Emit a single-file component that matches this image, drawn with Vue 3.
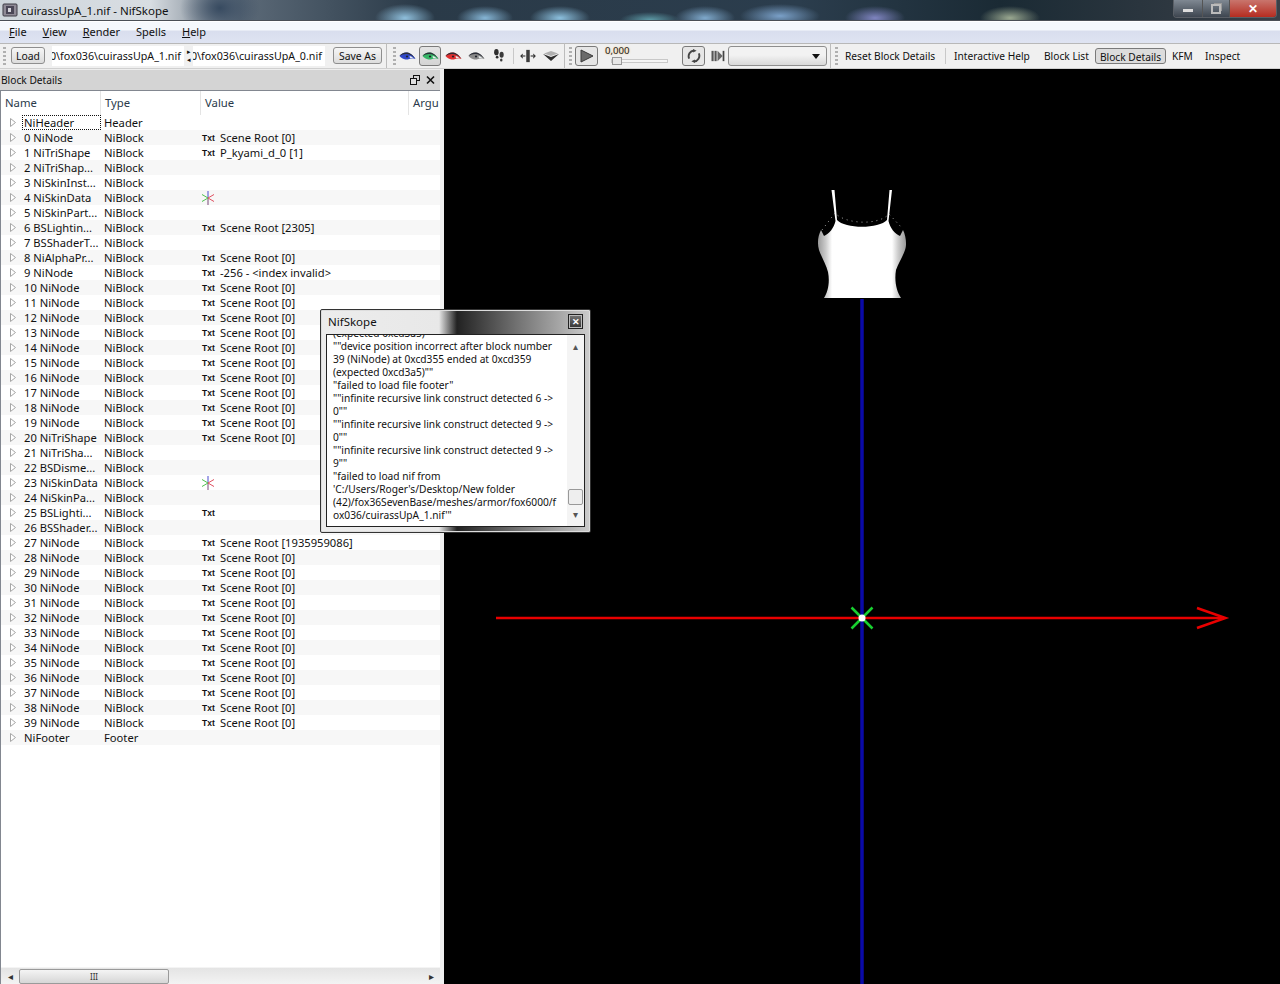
<script setup>
const short = { 2: 'NiTriShap...', 3: 'NiSkinInst...', 4: 'NiSkinData', 5: 'NiSkinPart...', 6: 'BSLightin...', 7: 'BSShaderT...', 8: 'NiAlphaPr...', 1: 'NiTriShape', 20: 'NiTriShape', 21: 'NiTriSha...', 22: 'BSDisme...', 23: 'NiSkinData', 24: 'NiSkinPa...', 25: 'BSLighti...', 26: 'BSShader...' }
const values = { 1: 'P_kyami_d_0 [1]', 6: 'Scene Root [2305]', 9: '-256 - <index invalid>', 25: '', 27: 'Scene Root [1935959086]' }
const noText = [2, 3, 4, 5, 7, 21, 22, 23, 24, 26]
const stars = [4, 23]

const rows = [{ key: 'h', name: 'NiHeader', type: 'Header', focus: true }]
for (let i = 0; i < 40; i++) {
  rows.push({
    key: i,
    name: i + ' ' + (short[i] || 'NiNode'),
    type: 'NiBlock',
    txt: !noText.includes(i),
    star: stars.includes(i),
    value: noText.includes(i) ? '' : (values[i] ?? 'Scene Root [0]')
  })
}
rows.push({ key: 'f', name: 'NiFooter', type: 'Footer' })

const logLines = [
  '""device position incorrect after block number',
  '39 (NiNode) at 0xcd355 ended at 0xcd359',
  '(expected 0xcd3a5)""',
  '"failed to load file footer"',
  '""infinite recursive link construct detected 6 ->',
  '0""',
  '""infinite recursive link construct detected 9 ->',
  '0""',
  '""infinite recursive link construct detected 9 ->',
  '9""',
  '"failed to load nif from',
  "'C:/Users/Roger's/Desktop/New folder",
  '(42)/fox36SevenBase/meshes/armor/fox6000/f',
  "ox036/cuirassUpA_1.nif'\""
]
const eyes = [
  { color: '#2f48c8', on: false },
  { color: '#35b565', on: true },
  { color: '#e03030', on: false },
  { color: '#8a8a8a', on: false }
]
</script>

<template>
  <div class="window">
    <header class="titlebar">
      <svg class="appicon" width="16" height="16" viewBox="0 0 16 16">
        <rect x="1" y="2" width="14" height="12" rx="1" fill="#8f8a96" stroke="#3d3a44" />
        <rect x="4" y="4" width="8" height="8" fill="#4a4656" />
        <rect x="6" y="6" width="3" height="4" fill="#d5d3da" />
      </svg>
      <span class="title">cuirassUpA_1.nif - NifSkope</span>
      <div class="caption">
        <span class="cap min"><i></i></span>
        <span class="cap max"><i></i></span>
        <span class="cap close">✕</span>
      </div>
    </header>

    <nav class="menubar">
      <span><u>F</u>ile</span>
      <span><u>V</u>iew</span>
      <span><u>R</u>ender</span>
      <span>Spells</span>
      <span><u>H</u>elp</span>
    </nav>

    <div class="toolbar">
      <div class="grip"></div>
      <button class="btn load">Load</button>
      <div class="path p1">0\fox036\cuirassUpA_1.nif</div>
      <div class="swap"><b>▸</b><b>◂</b></div>
      <div class="path p2">0\fox036\cuirassUpA_0.nif</div>
      <button class="btn save">Save As</button>
      <div class="sep"></div>
      <div class="grip"></div>
      <div class="icons">
        <span v-for="eye in eyes" :key="eye.color" class="tool" :class="{ on: eye.on }">
          <svg width="17" height="10" viewBox="0 0 17 10">
            <path d="M.5 5 C4 .5 11 -.5 16.500 8 C11 6.500 10 9 6.500 8.500 C4 8.200 2 6.500 .5 5Z" :fill="eye.color" />
            <path d="M.5 5 C4 .5 11 -.5 16.500 8 C12 2.500 6 1.500 .5 5Z" fill="#2c2f38" />
            <circle cx="8" cy="5.500" r="1.100" fill="#20242c" />
            <path d="M10.500 5 C12 5 13.500 6.300 14.500 7.300 L11 7.300Z" fill="#e6ecec" />
          </svg>
        </span>
        <span class="tool">
          <svg width="12" height="15" viewBox="0 0 16 18">
            <ellipse cx="4.500" cy="4.500" rx="3" ry="4.200" fill="#2e2e2e" />
            <ellipse cx="5.500" cy="11.200" rx="1.800" ry="1.800" fill="#2e2e2e" />
            <ellipse cx="11.500" cy="8" rx="2.800" ry="4" fill="#3a3a3a" />
            <ellipse cx="11" cy="15" rx="1.700" ry="2" fill="#3a3a3a" />
          </svg>
        </span>
        <i class="vline"></i>
        <span class="tool">
          <svg width="16" height="14" viewBox="0 0 18 16">
            <rect x="7" y="1" width="4" height="14" fill="#3c3c3c" />
            <path d="M0 8l3-3v6zM18 8l-3-3v6z" fill="#333" />
            <rect x="3" y="7" width="3" height="2" fill="#777" />
            <rect x="12" y="7" width="3" height="2" fill="#777" />
          </svg>
        </span>
        <span class="tool">
          <svg width="16" height="10" viewBox="0 0 16 10">
            <path d="M1 2.500 L8 0 L15 2.500 L8 5Z" fill="#b0b0b0" />
            <path d="M0 3 L8 6 L16 3 L8 10Z" fill="#2e2e2e" />
          </svg>
        </span>
      </div>
      <div class="sep after-icons"></div>
      <div class="grip"></div>
      <span class="tool square">
        <svg width="14" height="14" viewBox="0 0 14 14"><path d="M1 1 L13 7 L1 13Z" fill="#6a6a6a" stroke="#3a3a3a" /></svg>
      </span>
      <div class="timebox">
        <span class="time">0,000</span>
        <div class="slider"><i></i></div>
      </div>
      <span class="tool square loop">
        <svg width="14" height="14" viewBox="0 0 16 16" fill="none" stroke="#444" stroke-width="2.200">
          <path d="M2.500 11 A6.500 6.500 0 0 1 8 1.800" />
          <path d="M13.500 5 A6.500 6.500 0 0 1 8 14.200" />
          <path d="M7 0 L11 2 L7 4Z M9 16 L5 14 L9 12Z" fill="#444" stroke="none" />
        </svg>
      </span>
      <span class="tool step">
        <svg width="15" height="12" viewBox="0 0 16 14">
          <rect x="1" y="1" width="2.500" height="12" fill="#555" />
          <rect x="4.500" y="1" width="2.500" height="12" fill="#555" />
          <path d="M8 1 L14 7 L8 13Z" fill="#666" />
          <rect x="14" y="1" width="2" height="12" fill="#444" />
        </svg>
      </span>
      <div class="combo"><i></i></div>
      <div class="sep after-combo"></div>
      <div class="grip"></div>
      <div class="actions">
        <span class="a-reset">Reset Block Details</span>
        <i class="vline"></i>
        <span class="a-help">Interactive Help</span>
        <span class="a-list">Block List</span>
        <span class="active">Block Details</span>
        <span class="a-kfm">KFM</span>
        <span>Inspect</span>
      </div>
    </div>

    <main class="workspace">
      <section class="dock">
        <div class="dockhead">
          <span>Block Details</span>
          <svg class="dockicons" width="26" height="10" viewBox="0 0 26 10" fill="none" stroke="#111">
            <rect x="3.500" y=".5" width="6" height="5" />
            <rect x=".5" y="3.500" width="6" height="6" fill="#e0e0e0" />
            <path d="M17 1.500 L24 8.500 M24 1.500 L17 8.500" stroke-width="1.600" />
          </svg>
        </div>
        <div class="tree">
          <div class="thead">
            <span class="c-name">Name</span>
            <span class="c-type">Type</span>
            <span class="c-value">Value</span>
            <span class="c-arg">Argu</span>
          </div>
          <div class="tbody">
            <div v-for="(row, i) in rows" :key="row.key" class="row" :class="{ alt: i % 2 === 1 }">
              <svg class="arrow" width="6" height="9" viewBox="0 0 6 9"><path d="M.5 .5 L5.500 4.500 L.5 8.500Z" fill="#fff" stroke="#a6a6a6" /></svg>
              <span class="name" :class="{ focus: row.focus }">{{ row.name }}</span>
              <span class="type">{{ row.type }}</span>
              <span class="value">
                <b v-if="row.txt" class="txt">Txt</b>
                <svg v-if="row.star" class="star" width="14" height="14" viewBox="0 0 14 14" stroke-width="1">
                  <path d="M7 0 V7" stroke="#4a4ad0" />
                  <path d="M7 7 V14" stroke="#7a4a7a" />
                  <path d="M1 3.500 L7 7 L1 10.500" stroke="#50c050" fill="none" />
                  <path d="M13 3.500 L7 7 L13 10.500" stroke="#e05060" fill="none" />
                </svg>
                <span v-if="row.value" class="valtext">{{ row.value }}</span>
              </span>
            </div>
          </div>
          <div class="hscroll">
            <span class="sarrow">◂</span>
            <div class="hthumb">III</div>
            <span class="sarrow right">▸</span>
          </div>
        </div>
      </section>

      <section class="viewport">
        <svg width="836" height="915" viewBox="444 69 836 915">
          <defs>
            <linearGradient id="side" x1="0" x2="1" y1="0" y2="0">
              <stop offset="0" stop-color="#999" />
              <stop offset=".09" stop-color="#ccc" />
              <stop offset=".16" stop-color="#fff" />
              <stop offset=".84" stop-color="#fff" />
              <stop offset=".91" stop-color="#ccc" />
              <stop offset="1" stop-color="#999" />
            </linearGradient>
          </defs>
          <line x1="862" y1="299" x2="862" y2="984" stroke="#0a0aa8" stroke-width="3.500" />
          <line x1="496" y1="618" x2="1224" y2="618" stroke="#e80000" stroke-width="2.500" />
          <path d="M1197 608 L1225.500 618 L1197 628" fill="none" stroke="#e80000" stroke-width="2.500" />
          <path d="M851.500 607.500 L872.500 628.500 M872.500 607.500 L851.500 628.500" stroke="#18d030" stroke-width="2.500" />
          <circle cx="862" cy="618" r="3.500" fill="#fff" />
          <path d="M831.500 190 L834.500 190 L837 220 C845 229 879 229 887 220 L889.500 190 L892 190 L888.500 221 C890 228 895 234 900 236 L903 230 C906 236 907 245 905 250 C903 256 899 262 896 270 C894 282 897 292 901 298 L824 298 C828 292 830 282 828 272 C826 264 821 256 819 250 C817 243 818 236 821 230 L824 236 C829 234 834 228 835.500 221 Z" fill="url(#side)" />
          <path d="M822 230 L835 213 C845 224 878 226 889 214 L902 228" fill="none" stroke="#ccc" stroke-width=".8" stroke-dasharray="1 4" />
        </svg>
      </section>
    </main>

    <aside class="dialog">
      <div class="dialoghead">
        <span>NifSkope</span>
        <span class="dialogclose">✕</span>
      </div>
      <div class="logbox">
        <div class="logtext">
          <div>(expected 0xcd3a5)""</div>
          <div v-for="(line, i) in logLines" :key="i">{{ line }}</div>
        </div>
        <div class="vscroll">
          <span class="varrow">▴</span>
          <div class="vthumb"></div>
          <span class="varrow">▾</span>
        </div>
      </div>
    </aside>
  </div>
</template>

<style scoped>
.window {
  position: relative;
  width: 1280px;
  height: 984px;
  overflow: hidden;
  display: flex;
  flex-direction: column;
  background: #f0f0f0;
  color: #111;
  font-family: "Noto Sans", "Liberation Sans", sans-serif;
  font-size: 10.4px;
}
.titlebar {
  height: 20px;
  flex: none;
  display: flex;
  align-items: center;
  padding-left: 2px;
  gap: 1px;
  border-bottom: 1px solid #4a4f55;
  background:
    radial-gradient(ellipse 30px 14px at 405px 18px, #8fbfdc, transparent),
    radial-gradient(ellipse 28px 12px at 485px 18px, #86b6d6, transparent),
    radial-gradient(ellipse 30px 12px at 560px 18px, #8cc0de, transparent),
    radial-gradient(ellipse 30px 8px at 650px 20px, #5e9ca8, transparent),
    radial-gradient(ellipse 30px 12px at 705px 18px, #7fa9cc, transparent),
    radial-gradient(ellipse 40px 12px at 780px 16px, #7aa0c8, transparent),
    radial-gradient(ellipse 30px 12px at 875px 18px, #7f84c0, transparent),
    radial-gradient(ellipse 30px 12px at 1010px 18px, #9aa890, transparent),
    radial-gradient(ellipse 40px 30px at 220px 8px, #374a60, transparent),
    linear-gradient(90deg, #cfd6dc 0, #d8dde2 150px, #5c6a78 240px, #2a3a48 420px, #2b3d4d 800px, #1a2a34 1000px, #3a4048 1280px);
}
.appicon { flex: none; }
.title {
  font-size: 11.5px;
  color: #111;
  padding-left: 2px;
}
.caption {
  position: absolute;
  top: 0;
  right: 3px;
  display: flex;
  height: 17px;
  border: 1px solid #5a5f66;
  border-top: 0;
  border-radius: 0 0 4px 4px;
  overflow: hidden;
}
.cap {
  display: flex;
  align-items: center;
  justify-content: center;
  height: 17px;
  color: #fff;
  background: linear-gradient(#7f8892, #3e4650);
  border-right: 1px solid #555;
}
.min { width: 28px; }
.min i { width: 10px; height: 3px; background: #ddd; margin-top: 4px; }
.max { width: 26px; }
.max i { width: 6px; height: 6px; border: 2px solid #bbb; box-shadow: 2px -2px 0 -1px #999; }
.close {
  width: 46px;
  font-size: 12px;
  font-weight: 700;
  border-right: 0;
  background: linear-gradient(#c9756d, #b52c20);
}
.menubar {
  flex: none;
  display: flex;
  align-items: center;
  gap: 16px;
  padding: 0 0 2px 9px;
  font-size: 11px;
  border-top: 1px solid #fff;
  height: 19px;
  background: linear-gradient(#f5f8fc 0, #f5f8fc 8px, #d9deee 9px, #dfe4f2 100%);
}
.toolbar {
  height: 26px;
  flex: none;
  display: flex;
  align-items: center;
  padding: 0 0 1px 3px;
  background: #f0f0f0;
  border-top: 1px solid #b8b8b8;
  border-bottom: 1px solid #d0d0d0;
  box-sizing: border-box;
}
.grip {
  flex: none;
  width: 3px;
  height: 18px;
  background: repeating-linear-gradient(#b0b0b0 0 2px, transparent 2px 4px);
}
.btn {
  flex: none;
  height: 17px;
  padding: 0;
  font: inherit;
  color: #111;
  border: 1px solid #8e8e8e;
  border-radius: 3px;
  background: linear-gradient(#f6f6f6, #dcdcdc);
}
.load { width: 34px; margin-left: 5px; }
.save { width: 49px; margin-left: 8px; }
.path {
  flex: none;
  box-sizing: border-box;
  height: 20px;
  line-height: 20px;
  background: #fff;
  font-size: 10.7px;
  overflow: hidden;
  white-space: nowrap;
  text-indent: -2px;
}
.p1 { width: 132px; margin-left: 7px; }
.p2 { width: 132px; }
.swap {
  flex: none;
  width: 9px;
  display: flex;
  flex-direction: column;
  align-items: center;
  font-size: 7px;
  line-height: 8px;
}
.swap b { font-weight: 400; }
.sep {
  flex: none;
  width: 1px;
  height: 25px;
  margin: 0 6px 0 4px;
  background: #bcbcbc;
}
.sep.after-icons { margin: 0 4px 0 2px; }
.sep.after-combo { margin: 0 4px 0 3px; }
.icons {
  display: flex;
  align-items: center;
  gap: 1px;
}
.tool {
  flex: none;
  box-sizing: border-box;
  display: flex;
  align-items: center;
  justify-content: center;
  width: 22px;
  height: 20px;
}
.tool.on {
  border: 1px solid #7a7a7a;
  border-radius: 3px;
  background: linear-gradient(#e4e4e4, #d4d4d4);
}
.vline {
  flex: none;
  width: 1px;
  height: 16px;
  margin: 0 2px;
  background: #c8c8c8;
}
.square {
  border: 1px solid #7a7a7a;
  border-radius: 3px;
  width: 23px;
  height: 20px;
  margin-left: 3px;
  background: #e6e6e6;
}
.timebox {
  flex: none;
  width: 72px;
  margin-left: 7px;
  display: flex;
  flex-direction: column;
  font-size: 9.600px;
  line-height: 11px;
}
.time { color: #222; text-shadow: 0 0 2px #f0c070; }
.slider {
  position: relative;
  width: 55px;
  height: 2px;
  margin: 3px 0 3px 6px;
  border: 1px solid #c8c8c8;
  background: #f4f4f4;
}
.slider i {
  position: absolute;
  left: 0;
  top: -3px;
  width: 8px;
  height: 6px;
  border: 1px solid #999;
  background: #e8e8e8;
}
.loop { margin-left: 5px; }
.step { margin-left: 1px; }
.combo {
  position: relative;
  flex: none;
  box-sizing: border-box;
  width: 99px;
  height: 20px;
  border: 1px solid #8e8e8e;
  border-radius: 3px;
  background: linear-gradient(#f2f2f2 0, #f2f2f2 45%, #d8d8d8 100%);
}
.combo i {
  position: absolute;
  right: 6px;
  top: 7px;
  border: 4px solid transparent;
  border-top: 5px solid #111;
  border-bottom: 0;
}
.actions {
  display: flex;
  align-items: center;
  margin-left: 7px;
  white-space: nowrap;
  font-size: 10.2px;
}
.actions span { flex: none; }
.actions .vline { margin: 0 8px 0 0; }
.a-reset { width: 100px; }
.a-help { width: 90px; }
.a-list { width: 51px; }
.actions .active {
  box-sizing: border-box;
  width: 71px;
  height: 16px;
  line-height: 17px;
  text-align: center;
  margin-right: 6px;
  border: 1px solid #7a7a7a;
  border-radius: 3px;
  background: #dcdcdc;
}
.a-kfm { width: 33px; }
.workspace {
  flex: 1;
  min-height: 0;
  display: flex;
}
.dock {
  flex: none;
  width: 444px;
  display: flex;
  flex-direction: column;
  padding-right: 4px;
  box-sizing: border-box;
  background: #f0f0f0;
}
.dockhead {
  flex: none;
  height: 21px;
  display: flex;
  align-items: center;
  justify-content: space-between;
  padding: 0 3px 1px 1px;
  font-size: 10.2px;
  background: #d4d4d4;
  border-top: 1px solid #eee;
  box-sizing: border-box;
}
.dockicons { margin-right: 1px; }
.tree {
  flex: 1;
  min-height: 0;
  display: flex;
  flex-direction: column;
  background: #fff;
  border: 1px solid #828790;
  border-right: 0;
  border-bottom: 0;
  box-sizing: border-box;
  overflow: hidden;
}
.thead {
  flex: none;
  height: 24px;
  display: flex;
  align-items: center;
  font-size: 11.3px;
  color: #2a3a4a;
  white-space: nowrap;
}
.thead span {
  box-sizing: border-box;
  height: 100%;
  line-height: 24px;
  padding-left: 4px;
  border-right: 1px solid #e4e4e4;
}
.c-name { width: 100px; }
.c-type { width: 100px; }
.c-value { width: 208px; }
.c-arg { flex: 1; border-right: 0 !important; overflow: hidden; }
.tbody { flex: 1; min-height: 0; }
.row {
  height: 15px;
  display: flex;
  align-items: center;
  font-size: 11.2px;
  white-space: nowrap;
}
.row.alt { background: #f7f7f7; }
.arrow { flex: none; margin: 0 8px 0 9px; }
.name {
  flex: none;
  box-sizing: border-box;
  width: 77px;
  height: 15px;
  line-height: 15px;
  overflow: hidden;
}
.name.focus {
  margin-left: -2px;
  padding-left: 2px;
  width: 79px;
  outline: 1px dotted #111;
  outline-offset: -1px;
}
.type { flex: none; width: 98px; padding-left: 3px; box-sizing: border-box; }
.value {
  display: flex;
  align-items: center;
  margin-left: 3px;
}
.txt {
  flex: none;
  width: 18px;
  font-family: "Liberation Sans", sans-serif;
  font-size: 8.500px;
  font-weight: 700;
}
.star { margin-left: -1px; }
.valtext { white-space: nowrap; }
.hscroll {
  flex: none;
  height: 16px;
  display: flex;
  align-items: center;
  background: linear-gradient(#e4e4e4, #f3f3f3);
  border-top: 1px solid #f4f4f4;
  font-size: 10px;
  color: #333;
}
.sarrow { width: 18px; text-align: center; }
.sarrow.right { margin-left: auto; width: 17px; }
.hthumb {
  box-sizing: border-box;
  width: 150px;
  height: 15px;
  line-height: 13px;
  text-align: center;
  font-size: 8px;
  border: 1px solid #9a9a9a;
  border-radius: 2px;
  background: linear-gradient(#f4f4f4, #d6d6d6);
}
.viewport {
  flex: 1;
  min-width: 0;
  background: #000;
  line-height: 0;
}
.dialog {
  position: absolute;
  left: 320px;
  top: 309px;
  width: 271px;
  height: 224px;
  box-sizing: border-box;
  padding: 0 5px 5px 5px;
  display: flex;
  flex-direction: column;
  border: 1px solid #333;
  border-radius: 2px;
  box-shadow: inset 0 0 0 1px #ddd;
  background: linear-gradient(90deg, #ececec 0, #e8e8e8 118px, #222 136px, #777 200px, #ccc 100%);
}
.dialoghead {
  flex: none;
  height: 23px;
  display: flex;
  align-items: center;
  justify-content: space-between;
  padding: 0 2px 1px;
  font-size: 11.5px;
}
.dialogclose {
  box-sizing: border-box;
  width: 15px;
  height: 15px;
  line-height: 13px;
  text-align: center;
  font-size: 9px;
  font-weight: 700;
  color: #fff;
  border: 1px solid #222;
  background: linear-gradient(#777, #333);
  box-shadow: inset 0 0 0 1px #bbb;
}
.logbox {
  flex: 1;
  min-height: 0;
  display: flex;
  background: #fff;
  border: 1px solid #222;
  overflow: hidden;
}
.logtext {
  flex: 1;
  min-width: 0;
  padding: 0 0 0 6px;
  margin-top: -8px;
  line-height: 13px;
  font-size: 10.2px;
  white-space: nowrap;
  overflow: hidden;
}
.vscroll {
  flex: none;
  width: 17px;
  display: flex;
  flex-direction: column;
  align-items: center;
  background: #f4f4f4;
  font-size: 10px;
  color: #555;
  box-sizing: border-box;
  padding: 4px 0 5px;
}
.varrow { height: 14px; line-height: 14px; }
.vthumb {
  box-sizing: border-box;
  width: 15px;
  height: 16px;
  margin-top: auto;
  margin-bottom: 2px;
  border: 1px solid #999;
  border-radius: 2px;
  background: #eee;
}
</style>

<style>
html, body { background: #000; overflow: hidden; }
</style>
